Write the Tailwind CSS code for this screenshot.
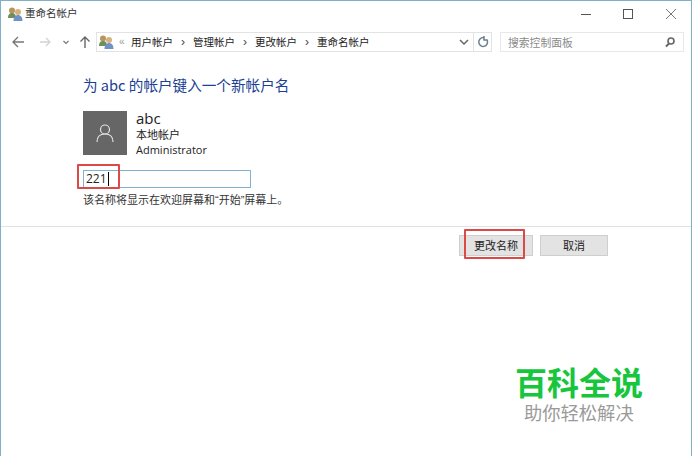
<!DOCTYPE html>
<html lang="zh-CN">
  <head>
    <meta charset="UTF-8" />
    <title>重命名帐户</title>
    <script src="https://cdn.jsdelivr.net/npm/@tailwindcss/browser@4"></script>
  </head>
  <body>
    <div class="relative h-[456px] w-[692px] overflow-hidden border-x border-t border-[#7fb0c4] bg-white font-['Noto_Sans_CJK_SC','Noto_Sans',sans-serif] text-[12px] text-[#222]">
      <!-- title bar -->
      <div class="flex h-[25px] items-center pl-[6px]">
        <svg width="16" height="16" viewBox="0 0 16 16">
          <circle cx="5" cy="4.5" r="3" fill="#b9945f" />
          <path d="M1 12c0-4 2-5 4-5s4 1 4 5z" fill="#6d8f5a" />
          <circle cx="11" cy="6" r="3" fill="#d8b27c" />
          <path d="M6.5 15c0-4 2-6 4.5-6s4.5 2 4.5 6z" fill="#6f93c9" />
        </svg>
        <span class="ml-[2px] text-[10.5px] leading-none text-[#333]">重命名帐户</span>
        <div class="ml-auto flex items-center">
          <svg width="12" height="12" viewBox="0 0 12 12" class="mr-[30px]"><path d="M1 6.5h10" stroke="#555" /></svg>
          <svg width="12" height="12" viewBox="0 0 12 12" class="mr-[31px]"><rect x="1.5" y="1.5" width="9" height="9" fill="none" stroke="#555" /></svg>
          <svg width="12" height="12" viewBox="0 0 12 12" class="mr-[14px]"><path d="M1 1l10 10M11 1L1 11" stroke="#777" /></svg>
        </div>
      </div>
      <!-- nav bar -->
      <div class="flex h-[26px] items-center pl-[10px] pt-[6px]">
        <svg width="14" height="14" viewBox="0 0 14 14"><path d="M13 7H2M7 2L2 7l5 5" fill="none" stroke="#777" stroke-width="1.4" /></svg>
        <svg width="14" height="14" viewBox="0 0 14 14" class="ml-[13px]"><path d="M2 7h10M8 3l4 4-4 4" fill="none" stroke="#d4d4d4" stroke-width="1.3" /></svg>
        <svg width="8" height="8" viewBox="0 0 8 8" class="ml-[10px]"><path d="M1.5 3l2.5 2.5L6.5 3" fill="none" stroke="#777" stroke-width="1.2" /></svg>
        <svg width="14" height="14" viewBox="0 0 14 14" class="ml-[8px]"><path d="M7 13V2M2.5 6.5L7 2l4.5 4.5" fill="none" stroke="#666" stroke-width="1.4" /></svg>
        <div class="ml-[4px] flex h-[20px] w-[396px] items-center border border-[#e3e3e3]">
          <svg width="16" height="16" viewBox="0 0 16 16" class="ml-[1px]">
            <circle cx="5" cy="4.5" r="3" fill="#b9945f" />
            <path d="M1 12c0-4 2-5 4-5s4 1 4 5z" fill="#6d8f5a" />
            <circle cx="11" cy="6" r="3" fill="#d8b27c" />
            <path d="M6.5 15c0-4 2-6 4.5-6s4.5 2 4.5 6z" fill="#6f93c9" />
          </svg>
          <span class="ml-[5px] w-[7px] font-['Liberation_Sans',sans-serif] text-[10px] leading-none text-[#999]">«</span>
          <span class="ml-[5px] text-[10.5px] leading-none">用户帐户</span>
          <span class="w-[20px] text-center font-['Liberation_Sans',sans-serif] text-[12px] leading-none text-[#444]">›</span>
          <span class="text-[10.5px] leading-none">管理帐户</span>
          <span class="w-[20px] text-center font-['Liberation_Sans',sans-serif] text-[12px] leading-none text-[#444]">›</span>
          <span class="text-[10.5px] leading-none">更改帐户</span>
          <span class="w-[20px] text-center font-['Liberation_Sans',sans-serif] text-[12px] leading-none text-[#444]">›</span>
          <span class="text-[10.5px] leading-none">重命名帐户</span>
          <svg width="10" height="10" viewBox="0 0 10 10" class="ml-auto mr-[4px]"><path d="M1 3l4 4 4-4" fill="none" stroke="#666" stroke-width="1.5" /></svg>
          <div class="flex h-full w-[18px] items-center justify-center border-l border-[#e3e3e3]">
            <svg width="12" height="12" viewBox="0 0 12 12"><path d="M9.8 3.5A4.4 4.4 0 1 1 6.5 1.6M7 0v4h3" fill="none" stroke="#6b7f92" stroke-width="1.5" /></svg>
          </div>
        </div>
        <div class="ml-[8px] flex h-[20px] w-[184px] items-center border border-[#e8e8e8] pl-[7px] pr-[7px]">
          <span class="text-[10.8px] leading-none text-[#8a8a8a]">搜索控制面板</span>
          <svg width="12" height="12" viewBox="0 0 12 12" class="ml-auto"><circle cx="7" cy="5" r="3" fill="none" stroke="#666" stroke-width="1.6" /><path d="M5 7.5L2 10.5" stroke="#666" stroke-width="2" /></svg>
        </div>
      </div>
      <!-- content -->
      <div class="pl-[82px] pt-[22px]">
        <h1 class="text-[14.6px] leading-[22px] text-[#1b3f94]">为 abc 的帐户键入一个新帐户名</h1>
        <div class="mt-[15px] flex">
          <div class="flex h-[44px] w-[44px] items-center justify-center bg-[#666]">
            <svg width="20" height="20" viewBox="0 0 20 20"><circle cx="10" cy="6.5" r="4.5" fill="none" stroke="#e4e4e4" stroke-width="1.2" /><path d="M2 19c0-5 3-8 8-8s8 3 8 8" fill="none" stroke="#e4e4e4" stroke-width="1.2" /></svg>
          </div>
          <div class="ml-[9px] -mt-px">
            <div class="text-[15px] leading-[17px] font-['Open_Sans',sans-serif]">abc</div>
            <div class="text-[11px] leading-[15px]">本地帐户</div>
            <div class="text-[11px] leading-[15px] font-['Open_Sans',sans-serif]">Administrator</div>
          </div>
        </div>
        <div class="mt-[13px] flex h-[18px] w-[168px] items-center border border-[#7eb4d2] pl-[2px] font-['Open_Sans',sans-serif] text-[12px] leading-none">221<span class="ml-[1px] h-[14px] w-px bg-black"></span></div>
        <p class="mt-[3px] text-[11px] leading-[16px] text-[#333]">该名称将显示在欢迎屏幕和<span class="font-['Liberation_Sans',sans-serif]">“</span>开始<span class="font-['Liberation_Sans',sans-serif]">”</span>屏幕上。</p>
      </div>
      <div class="mt-[18px] border-t border-[#e2e2e2]"></div>
      <div class="flex justify-end pr-[83px] pt-[8px]">
        <button class="h-[21px] w-[74px] border border-[#cfcfcf] bg-[#e3e3e3] text-[11px] leading-none">更改名称</button>
        <button class="ml-[7px] h-[21px] w-[68px] border border-[#cfcfcf] bg-[#e3e3e3] text-[11px] leading-none">取消</button>
      </div>
      <!-- annotations -->
      <div class="absolute left-[76px] top-[163px] h-[25px] w-[43px] rounded-[1px] border-2 border-[#dc4a48]"></div>
      <div class="absolute left-[463px] top-[228px] h-[30px] w-[61px] rounded-[1px] border-2 border-[#dc4a48]"></div>
      <!-- watermark -->
      <div class="absolute left-[514px] top-[364px] text-[32px] leading-[32px] font-bold text-[#17c63d]">百科全说</div>
      <div class="absolute left-[523px] top-[402px] text-[18.3px] leading-[18px] text-[#9a9a9a]">助你轻松解决</div>
    </div>
  </body>
</html>
